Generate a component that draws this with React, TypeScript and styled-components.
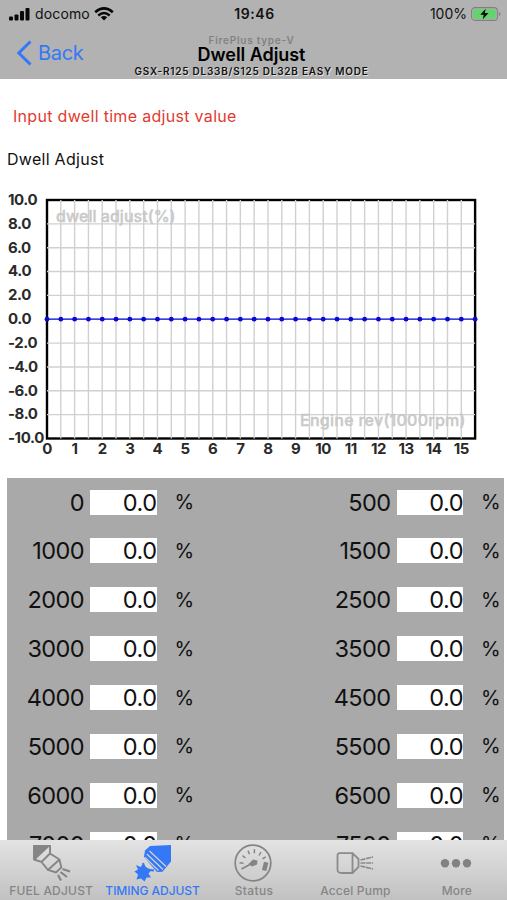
import React from "react";
import styled, { createGlobalStyle } from "styled-components";

const GlobalStyle = createGlobalStyle`
  * { box-sizing: border-box; }
  body { margin: 0; background: #fff; font-family: Inter, "Liberation Sans", sans-serif; }
  svg { display: block; flex: none; }
`;

const Screen = styled.div`
  display: flex;
  flex-direction: column;
  width: 507px;
  height: 900px;
  overflow: hidden;
  background: #fff;
  color: #111;
`;

const Header = styled.header`
  flex: none;
  height: 79px;
  background: #b2b2b2;
`;

const StatusBar = styled.div`
  display: grid;
  grid-template-columns: 1fr auto 1fr;
  align-items: center;
  height: 27px;
  padding: 0 6px 0 8px;
`;

const StatusGroup = styled.div<{ $end?: boolean }>`
  display: flex;
  align-items: center;
  gap: 4px;
  justify-content: ${(p) => (p.$end ? "flex-end" : "flex-start")};
`;

const StatusText = styled.span<{ $bold?: boolean; $spacing?: number }>`
  font-size: 14px;
  line-height: 20px;
  font-weight: ${(p) => (p.$bold ? 600 : 400)};
  letter-spacing: ${(p) => p.$spacing ?? 0}px;
  white-space: nowrap;
`;

const NavBar = styled.div`
  display: grid;
  grid-template-columns: 124px 1fr 128px;
  height: 51px;
`;

const BackButton = styled.button`
  display: flex;
  align-items: center;
  gap: 6px;
  height: 51px;
  padding: 0 0 0 16px;
  border: 0;
  background: none;
  color: #3478f6;
  font: 400 20px/28px Inter, sans-serif;
  letter-spacing: -0.3px;
`;

const Titles = styled.div`
  display: flex;
  flex-direction: column;
  align-items: center;
  padding-top: 8px;
  white-space: nowrap;
`;

const Brand = styled.div`
  font-size: 10px;
  line-height: 11px;
  font-weight: 600;
  letter-spacing: 0.75px;
  color: #828282;
`;

const Title = styled.h1`
  margin: 0;
  font-size: 18px;
  line-height: 18px;
  font-weight: 600;
  letter-spacing: -0.05px;
  color: #000;
`;

const Model = styled.div`
  margin-top: 1px;
  font-size: 10px;
  line-height: 13px;
  font-weight: 600;
  letter-spacing: 0.77px;
  text-shadow: 1px 1px 0 #e2e2e2;
`;

const Content = styled.main`
  flex: 1;
  min-height: 0;
  overflow: hidden;
`;

const Prompt = styled.p`
  margin: 27px 0 0 13px;
  font-size: 16px;
  line-height: 20px;
  letter-spacing: 0.31px;
  color: #df3b30;
`;

const SectionTitle = styled.h2`
  margin: 23px 0 0 7px;
  font-size: 16px;
  line-height: 20px;
  font-weight: 400;
  letter-spacing: 0.28px;
`;

const ChartBox = styled.div`
  height: 308.5px;
`;

const Table = styled.section`
  display: grid;
  grid-template-columns: 306.5px 190px;
  grid-auto-rows: 48.9px;
  margin-left: 7px;
  width: 496.5px;
  background: #a9a9a9;
`;

const Cell = styled.div`
  display: grid;
  grid-template-columns: 77px 66.5px 20px;
  column-gap: 6px;
  align-items: center;
  height: 49px;
`;

const Rev = styled.span`
  font-size: 23.5px;
  line-height: 25px;
  text-align: right;
  letter-spacing: -0.6px;
`;

const Value = styled.span`
  height: 25px;
  background: #fff;
  font-size: 23.5px;
  line-height: 25px;
  text-align: right;
  letter-spacing: -0.5px;
`;

const Unit = styled.span`
  padding-left: 12px;
  font-size: 20px;
  line-height: 25px;
  padding-top: 1px;
`;

const TabBar = styled.nav`
  flex: none;
  display: grid;
  grid-template-columns: repeat(5, 1fr);
  height: 60px;
  background: linear-gradient(#e3e3e3, #c1c1c1);
`;

const Tab = styled.button<{ $active?: boolean; $spacing?: number }>`
  display: flex;
  flex-direction: column;
  align-items: center;
  padding: 2px 0 0;
  border: 0;
  background: none;
  color: ${(p) => (p.$active ? "#3478f6" : "#858585")};
  font: 500 12px/16px Inter, sans-serif;
  letter-spacing: ${(p) => p.$spacing ?? 0}px;
  white-space: nowrap;
`;

const TabLabel = styled.span`
  margin-top: 1px;
  padding-left: 1px;
`;

const X0 = 47;
const Y0 = 200;
const DX = 13.81;
const DY = 23.85;
const X1 = X0 + 31 * DX;
const Y1 = Y0 + 10 * DY;

function Chart() {
  const cols = Array.from({ length: 32 }, (_, i) => X0 + i * DX);
  const rows = Array.from({ length: 11 }, (_, i) => Y0 + i * DY);
  return (
    <svg width="507" height="308.5" viewBox="0 169 507 308.5" fontFamily="Inter, sans-serif">
      <rect x={X0} y={Y0} width={X1 - X0} height={Y1 - Y0} fill="#fff" stroke="#000" strokeWidth="2.4" />
      <g stroke="#d0d0d0" strokeWidth="1.4">
        {cols.slice(1, -1).map((x) => <path key={x} d={`M${x} ${Y0}V${Y1}`} />)}
        {rows.slice(1, -1).map((y) => <path key={y} d={`M${X0} ${y}H${X1}`} />)}
      </g>
      <g fill="#c9c9c9" stroke="#c9c9c9" strokeWidth="0.4" fontSize="16" fontWeight="500">
        <text x="56" y="221.5" textLength="119.5">dwell adjust(%)</text>
        <text x="300" y="426" textLength="165.5">Engine rev(1000rpm)</text>
      </g>
      <path d={`M${X0} 319.2H${X1}`} stroke="#1010e0" strokeWidth="1.3" />
      {cols.map((x) => <circle key={x} cx={x} cy="319.2" r="2.4" fill="#0808d8" />)}
      <g fill="#2a2a2a" fontSize="15" fontWeight="700" letterSpacing="-0.4">
        {rows.map((y, i) => <text key={y} x="8" y={y + 4.8}>{(10 - i * 2).toFixed(1)}</text>)}
        {Array.from({ length: 16 }, (_, i) => (
          <text key={i} x={X0 + i * DX * 2} y="453.5" textAnchor="middle">{i}</text>
        ))}
      </g>
    </svg>
  );
}

const Signal = () => (
  <svg width="23" height="14" viewBox="0 0 23 14" fill="#080808">
    <rect x="1" y="9.5" width="4" height="4" rx="1" />
    <rect x="6.5" y="7.5" width="4" height="6" rx="1" />
    <rect x="12" y="4" width="4" height="9.5" rx="1" />
    <rect x="17.5" y="1" width="4" height="12.5" rx="1" />
  </svg>
);

const Wifi = () => (
  <svg width="20" height="14" viewBox="0 0 20 14" fill="none" stroke="#080808" strokeWidth="2.6">
    <path d="M1.2 5.2Q10-2.3 18.8 5.2M4.3 8.4Q10 3.6 15.7 8.4" />
    <path d="M10 13.5L6.8 10.3Q10 7.9 13.2 10.3Z" fill="#080808" stroke="none" />
  </svg>
);

const Battery = () => (
  <svg width="30" height="14" viewBox="0 0 30 14">
    <rect x=".6" y=".6" width="25.8" height="12.8" rx="3.4" fill="#b2b2b2" stroke="#808080" strokeWidth="1.1" />
    <rect x="2.2" y="2.2" width="22.6" height="9.6" rx="2" fill="#62d36d" />
    <path d="M27.8 4.8Q31.5 7 27.8 9.2Z" fill="#858585" />
    <path d="M14.7 1.7L9.3 7.7H12.7L11.8 12.3L17.5 6.1H13.8Z" fill="#080808" />
  </svg>
);

const FuelIcon = () => (
  <svg width="40" height="40" viewBox="0 0 40 40" fill="none" stroke="#858585" strokeWidth="1.9">
    <path d="M3 3.5V19L19.5 3.5Z" fill="#858585" stroke="none" />
    <path d="M3 18V4H19V11.5L10.5 20L3 17.5M19 11.5L28.5 17.5L30.3 25.5L25 30.5L17 28L10.5 20M28.5 17.5L17 28" />
    <path d="M31.5 27L39 29.5M29.5 30L36 35M27 33L30 38.5" strokeWidth="2.2" />
  </svg>
);

const TimingIcon = () => (
  <svg width="40" height="40" viewBox="0 0 40 40" fill="#3478f6">
    <path d="M18 4L39 3V19.5L30.5 29.8L25 30L12 15L13 8.5Z" />
    <path d="M17.5 9L34 24.5M14.8 12L31 27.5M12.8 15.2L26.5 28.5" stroke="#d6d6d6" strokeWidth="1.1" />
    <path d="M11 21Q12 28.5 22 28.5" fill="none" stroke="#3478f6" strokeWidth="2" />
    <path d="M4 23L8.5 25L11 22L13.5 26.5L19.5 28L16.5 31.5L19 35.5L14.5 35.5L12.5 39.5L9 36.5L4.5 37.5L6 32.5L2.5 29.5L6 27.5Z" />
  </svg>
);

const StatusIcon = () => (
  <svg width="40" height="40" viewBox="0 0 40 40" fill="none" stroke="#858585">
    <circle cx="20" cy="21" r="17.8" strokeWidth="1.7" />
    <path d="M6.5 20.8L10.5 21.3M9.5 13.7L12.5 16M15 8.6L16.5 12.2M21.5 7.2L21.3 11.3M28 10L26 13.5M32.6 14.8L29.5 16.8" strokeWidth="1.5" />
    <path d="M8.5 27L19.8 21" strokeWidth="1.7" />
    <path d="M15.5 22L20 17.5L24.5 18.5L24 22.5L19 24.5Z" fill="#858585" stroke="none" />
    <rect x="30" y="20" width="4.5" height="8.5" transform="rotate(14 32 24)" fill="#858585" stroke="none" />
  </svg>
);

const PumpIcon = () => (
  <svg width="40" height="40" viewBox="0 0 40 40" fill="none" stroke="#8b8b8b" strokeWidth="1.8">
    <path d="M4.5 11.2H17.5V31H6.5Q2.5 31 2.5 27.5V14Q2.5 11.2 4.5 11.2ZM17.5 11.2L23.5 17V25L17.5 31" />
    <path d="M25.5 18L38 15M25.5 21H38M25.5 24L38 27" strokeWidth="1.7" strokeDasharray="5 .7" />
  </svg>
);

const MoreIcon = () => (
  <svg width="40" height="40" viewBox="0 0 40 40" fill="#828282">
    <circle cx="9" cy="21.3" r="4.2" /><circle cx="20" cy="21.3" r="4.2" /><circle cx="31" cy="21.3" r="4.2" />
  </svg>
);

const tabs = [
  { label: "FUEL ADJUST", Icon: FuelIcon, spacing: 0.2 },
  { label: "TIMING ADJUST", Icon: TimingIcon, spacing: -0.05, active: true },
  { label: "Status", Icon: StatusIcon, spacing: 0.35 },
  { label: "Accel Pump", Icon: PumpIcon, spacing: 0.2 },
  { label: "More", Icon: MoreIcon, spacing: 0.1 },
];

export default function App() {
  return (
    <Screen>
      <GlobalStyle />
      <Header>
        <StatusBar>
          <StatusGroup>
            <Signal />
            <StatusText $spacing={0.15}>docomo</StatusText>
            <Wifi />
          </StatusGroup>
          <StatusText $bold $spacing={0.6}>19:46</StatusText>
          <StatusGroup $end>
            <StatusText>100%</StatusText>
            <Battery />
          </StatusGroup>
        </StatusBar>
        <NavBar>
          <BackButton>
            <svg width="16" height="26" viewBox="0 0 16 26" fill="none" stroke="#3478f6" strokeWidth="3">
              <path d="M14.5 1.5L2.8 13L14.5 24.5" />
            </svg>
            Back
          </BackButton>
          <Titles>
            <Brand>FirePlus type-V</Brand>
            <Title>Dwell Adjust</Title>
            <Model>GSX-R125 DL33B/S125 DL32B EASY MODE</Model>
          </Titles>
        </NavBar>
      </Header>
      <Content>
        <Prompt>Input dwell time adjust value</Prompt>
        <SectionTitle>Dwell Adjust</SectionTitle>
        <ChartBox><Chart /></ChartBox>
        <Table>
          {Array.from({ length: 16 }, (_, i) => (
            <Cell key={i}>
              <Rev>{i * 500}</Rev>
              <Value>0.0</Value>
              <Unit>%</Unit>
            </Cell>
          ))}
        </Table>
      </Content>
      <TabBar>
        {tabs.map(({ label, Icon, spacing, active }) => (
          <Tab key={label} $active={active} $spacing={spacing}>
            <Icon />
            <TabLabel>{label}</TabLabel>
          </Tab>
        ))}
      </TabBar>
    </Screen>
  );
}
